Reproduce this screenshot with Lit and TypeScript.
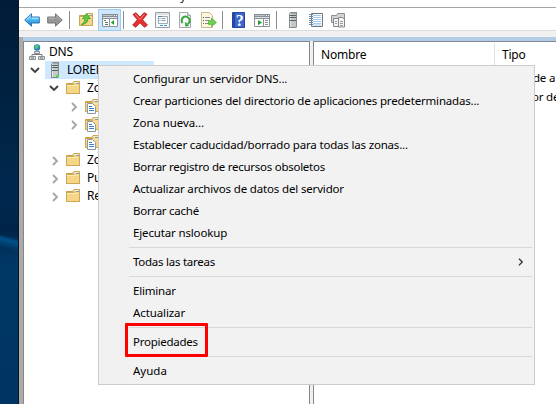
import { LitElement, html, css, svg, nothing } from "lit";
import { customElement, property } from "lit/decorators.js";
import { styleMap } from "lit/directives/style-map.js";

const folder = svg`
  <path d="M1.500 3.500h6l1.500-2h5.500v12h-13z" fill="#e9c97c" stroke="#c79d45"/>
  <path d="M9 2h5v3H9z" fill="#fff" stroke="#d9c58c" stroke-width=".6"/><path d="M11 3h3v1h-3z" fill="#4a93df"/>
  <path d="M1.500 4.500h7l1-.500h5v9.500h-13z" fill="#f5d686" stroke="#cda751"/>
  <path d="M2 5.500h7l1-.500h4" stroke="#fff0bd" fill="none"/>`;
const tower = svg`
  <path d="M4 2L5.500 0H12v15l-1 1H4z" fill="#858b8c"/>
  <path d="M5 1.500h6V15H5z" fill="#c3c8c9"/><path d="M5 1.500h1V15H5z" fill="#e4e7e7"/>
  <path d="M5 3.500h6M5 5.500h6M5 8.500h6" stroke="#5c6364"/>`;
const win = svg`
  <path d="M.500 3.500h15v11H.5z" fill="#fff" stroke="#8b9297"/>
  <path d="M0 2h16v5H0z" fill="#858e94"/><path d="M1 3.500h10" stroke="#bcc4c9"/><path d="M1 5.500h14" stroke="#dce2e5"/>
  <path d="M12 3.500h1M14 3.500h1" stroke="#fff"/>`;
const arrow = "M.7 8L7.500 1.800V5h7.800v6H7.500v3.200z";

const icons: Record<string, unknown> = {
  folder,
  back: svg`<defs><linearGradient id="b" x2="0" y2="1"><stop stop-color="#8edbff"/><stop offset=".5" stop-color="#4db8f0"/><stop offset="1" stop-color="#1675cc"/></linearGradient></defs>
    <path d=${arrow} fill="url(#b)" stroke="#2d75b5"/><path d="M2.500 7.500L7 3.500M8 6.200h6.500" stroke="#b8eaff" fill="none"/>`,
  forward: svg`<g transform="matrix(-1 0 0 1 16 0)"><path d=${arrow} fill="#969696" stroke="#747474"/><path d="M2.500 7.500L7 3.500M8 6.200h6.500" stroke="#bbb" fill="none"/></g>`,
  up: svg`${folder}<path d="M3 12.500c3.200-1 3.800-3.500 3.600-6H4.500L8.500 1.500l4 5h-2.700c.4 3.500-2 6-6.800 6z" fill="#5ccb3c" stroke="#2f9a22" stroke-width=".7"/>`,
  tree: svg`${win}<path d="M2 8.500h2M3 10.500h3M3 12.500h3" stroke="#637078"/><path d="M7.500 7v7" stroke="#8b9297"/><path d="M12 8v5L8.800 10.500z" fill="#23a12b"/>`,
  remove: svg`<path d="M1 2.500L4 .7l4 4.400L12 .7l3 1.500-4.500 5.600L15.500 13l-3 2.300L8 10.800l-4.300 4.500-3-2.300 4.700-5.200z" fill="#e6302e" stroke="#b01c20" stroke-width=".8"/><path d="M3.500 2.500l4.500 5 4-5" stroke="#ff8982" fill="none"/>`,
  props: svg`<path d="M.5.5h14v15H.5z" fill="#f7f8f9" stroke="#979ea5"/><path d="M1 2h13" stroke="#c4cbd0"/><path d="M3.500 4.500h9v7h-9z" fill="#fff" stroke="#a1abb4"/><path d="M3 4.500h4" stroke="#6f7d88"/><path d="M4.500 6.500h1M4.500 8.500h1M5 13.500h3M9 13.500h3" stroke="#39a0db"/><path d="M6.500 6.500h4M6.500 8.500h4" stroke="#8b9aa6"/>`,
  refresh: svg`<path d="M1.500.500h8l3 3v12h-11z" fill="#fafafa" stroke="#a3a8ab"/><path d="M9.500.500v3h3" fill="#ddd" stroke="#a3a8ab"/><path d="M4.600 11.200A4 4 0 1 1 9.700 12" fill="none" stroke="#35a63f" stroke-width="2"/><path d="M7.200 9.500v5l4-.5z" fill="#35a63f"/>`,
  export: svg`<path d="M.500.500h8l3 3v12H.5z" fill="#fdf7dc" stroke="#c6b98c"/><path d="M2 5.500h1M2 8.500h1M2 11.500h1" stroke="#555"/><path d="M4 5.500h5M4 8.500h4M4 11.500h4" stroke="#8b87a6"/><path d="M7.500 8.500h3V6l5 4.500-5 4.200V12.500h-3z" fill="#6bd04f" stroke="#43a535" stroke-width=".6"/>`,
  help: svg`<path d="M1.500.500h12v15h-12z" fill="#3b66cf" stroke="#24469e"/><path d="M2 1h2v14H2z" fill="#24469e"/><text x="8.700" y="13.500" text-anchor="middle" class="q">?</text>`,
  run: svg`${win}<path d="M4 8v5.200L8 10.600z" fill="#23a12b"/><path d="M9.500 7v7M11 8.500h3M11 10.500h3M11 12.500h3" stroke="#8b9297"/>`,
  server: tower,
  host: svg`${tower}<path d="M9 13h3v2H9z" fill="#4de02c"/>`,
  book: svg`<path d="M3.500 1.500h11v13h-11z" fill="#f9fbfd" stroke="#6f7780"/><path d="M5 3.500h8M5 5.500h8M5 7.500h8M5 9.500h8M5 11.500h8M5 13h8" stroke="#9cc5e8" stroke-width=".9"/><path d="M1 2.500h4M1 4.500h4M1 6.500h4M1 8.500h4M1 10.500h4M1 12.500h4" stroke="#6789aa"/>`,
  docs: svg`<path d="M1.500 3.500h5l1-2h7v9h-13z" fill="#d2d2d2" stroke="#909090"/><path d="M3.500 6.500h5v8h-5zM8.500 5.500h4l2 2v7.500h-6z" fill="#f5f5f5" stroke="#858585"/><path d="M5 9.500h2M5 11.500h2M10 9.500h3M10 11.500h3M10 13.500h3" stroke="#999"/>`,
  zone: svg`${folder}<path d="M3.500 5.500h5l3 3v7h-8z" fill="#fff" stroke="#8e99a5"/><path d="M5 8.500h3M5 10.500h5M5 12.500h5" stroke="#3b7fc4"/>`,
  dns: svg`<circle cx="8" cy="3.500" r="3.200" fill="#2682bf"/><path d="M6 1.500l3-.7 1 1.700-2 2.500-1.500-.5-1.200 1z" fill="#55c863"/><path d="M8 10v1M3 12v-1.500h10V12" stroke="#777" fill="none"/><path d="M5.500 7.500h5v2h-5z" fill="#e2e5e6" stroke="#8a9194"/><path d="M.500 12.500h6v3h-6zM9.500 12.500h6v3h-6z" fill="#e2e5e6" stroke="#8a9194"/><path d="M2 14h3M11 14h3" stroke="#697175"/>`,
};

@customElement("ui-icon")
class UiIcon extends LitElement {
  @property() name = "";
  static styles = css`
    :host { display: block; width: 16px; height: 16px; flex: none; }
    svg { display: block; }
    .q { font: bold 16px "Liberation Serif", serif; fill: #fff; }
  `;
  render() {
    return html`<svg width="16" height="16" viewBox="0 0 16 16">${icons[this.name]}</svg>`;
  }
}

interface Entry { label?: string; spacing?: number; sub?: boolean; marked?: boolean; }
const menu: Entry[] = [
  { label: "Configurar un servidor DNS...", spacing: -0.14 },
  { label: "Crear particiones del directorio de aplicaciones predeterminadas..." },
  { label: "Zona nueva...", spacing: -0.08 },
  { label: "Establecer caducidad/borrado para todas las zonas..." },
  { label: "Borrar registro de recursos obsoletos", spacing: -0.26 },
  { label: "Actualizar archivos de datos del servidor", spacing: -0.16 },
  { label: "Borrar caché", spacing: -0.26 },
  { label: "Ejecutar nslookup", spacing: -0.15 },
  {},
  { label: "Todas las tareas", sub: true, spacing: -0.26 },
  {},
  { label: "Eliminar", spacing: -0.2 },
  { label: "Actualizar", spacing: -0.1 },
  {},
  { label: "Propiedades", marked: true, spacing: -0.25 },
  {},
  { label: "Ayuda", spacing: 0 },
];

@customElement("context-menu")
class ContextMenu extends LitElement {
  static styles = css`
    :host { display: block; box-sizing: border-box; width: 437px; height: 320px; border: 1px solid #ccc; padding: 2px;
      background: linear-gradient(90deg, #f2f2f2 2px, #f0f0f0 2px 30px, #f2f2f2 30px); }
    .row { height: 22px; display: flex; align-items: center; justify-content: space-between; padding: 0 8px 0 32px; position: relative; white-space: pre; }
    .line { height: 1px; margin: 3px 0 3px 28px; background: #d7d7d7; }
    .mark { position: absolute; left: 24px; top: -8px; width: 83px; height: 34px; box-sizing: border-box; border: 3px solid #fe0000; border-radius: 1px; z-index: 1; }
  `;
  render() {
    return menu.map((m) => m.label
      ? html`<div class="row"><span style=${styleMap({ letterSpacing: (m.spacing ?? -0.18) + "px" })}>${m.label}</span>
          ${m.sub ? html`<svg width="6" height="8" viewBox="0 0 6 8"><path d="M1 .8L4.300 4 1 7.200" fill="none" stroke="#333" stroke-width="1.300"/></svg>` : nothing}
          ${m.marked ? html`<div class="mark"></div>` : nothing}</div>`
      : html`<div class="line"></div>`);
  }
}

const tree = [
  { icon: "dns", label: "DNS", depth: 0 },
  { icon: "host", label: "LOREN", depth: 1, open: true, selected: true },
  { icon: "folder", label: "Zo", depth: 2, open: true },
  { icon: "zone", label: "", depth: 3, open: false },
  { icon: "zone", label: "", depth: 3, open: false },
  { icon: "zone", label: "", depth: 3 },
  { icon: "folder", label: "Zo", depth: 2, open: false },
  { icon: "folder", label: "Pu", depth: 2, open: false },
  { icon: "folder", label: "Re", depth: 2, open: false },
];

@customElement("app-root")
class AppRoot extends LitElement {
  static styles = css`
    :host { display: flex; position: relative; width: 556px; height: 404px; overflow: hidden; background: #fff; color: #000;
      font: 11.5px/18px "Noto Sans", "Open Sans", sans-serif; letter-spacing: -.2px; }
    .desk { width: 18px; border-right: 1px solid #111519; flex: none;
      background: linear-gradient(194deg, #00477c00 36%, #00508a 48%, #00477c00 75%) 0 226px / 18px 30px no-repeat,
        linear-gradient(#001c38, #00213f 20%, #00284f 48%, #002448 57%, #003764 64%, #003563); }
    .app { flex: 1; min-width: 0; display: flex; flex-direction: column; }
    .top { height: 7px; border-bottom: 1px solid #a4a6ab; overflow: hidden; display: flex; align-items: flex-end; padding-left: 154px; }
    .top span { height: 18px; margin-bottom: 2px; display: block; }
    .bar { height: 22px; border-bottom: 1px solid #dcdcdc; display: flex; align-items: center; padding-left: 5px; }
    .bar ui-icon { margin-top: 2px; }
    .sep { width: 1px; height: 18px; background: #8c8c8c; margin-top: 2px; }
    .on { width: 23px; height: 22px; box-sizing: border-box; border: 1px solid #99ccf3; background: #cde6fc; display: flex; justify-content: center; margin-top: 1px; align-items: center; }
    .on ui-icon { margin: 0; }
    .gap { height: 6px; background: #f0f0f0; border-left: 4px solid #f0f0f0; }
    .main { flex: 1; display: flex; border-left: 4px solid #ababab; background: #f0f0f0; }
    .left, .right { border-top: 1px solid #828790; background: #fff; box-sizing: border-box; }
    .band { display: flex; flex-direction: column; flex: 1; min-width: 0; border-top: 4px solid #b4cde6; }
    .panes { flex: 1; display: flex; gap: 3px; }
    .left { width: 287px; border-left: 1px solid #828790; border-right: 1px solid #828790; padding-top: 1px; }
    .right { flex: 1; min-width: 0; border-left: 1px solid #828790; }
    .node { height: 18px; display: flex; align-items: center; white-space: pre; font-size: 12px; }
    .tw { width: 12px; height: 12px; margin: 0 4px 0 -16px; }
    .tw path { fill: none; stroke-width: 1.900; }
    .open path { stroke: #404040; } .shut path { stroke: #a6a6a6; }
    .cell { display: flex; align-items: center; align-self: stretch; box-sizing: border-box; }
    .cell span { margin-left: 4px; }
    .inner { padding-left: 1px; }
    .inner span { margin-left: 6px; }
    .sel { background: #cde8ff; width: 109px; padding-left: 2px; }
    .sel span { margin-left: 4px; }
    .head { height: 23px; display: flex; font-size: 12px; letter-spacing: -.2px; }
    .head div { box-sizing: border-box; padding-left: 7px; line-height: 25px; }
    .head .name { width: 181px; border-right: 1px solid #e2e2e2; margin-top: 1px; height: 22px; line-height: 23px; }
    .vals { padding: 3px 0 0 219px; line-height: 19px; white-space: pre; letter-spacing: -.2px; }
    .vals div + div { margin-left: -1px; }
    context-menu { position: absolute; left: 98px; top: 65px; }
  `;
  private tools: [string, number][] = [["back", 0], ["forward", 7], ["|", 6], ["up", 8], ["tree", 4], ["|", 2], ["remove", 8], ["props", 7],
    ["refresh", 7], ["export", 7], ["|", 5], ["help", 8], ["run", 7], ["|", 6], ["server", 8], ["book", 7], ["docs", 6]];

  render() {
    return html`
      <div class="desk"></div>
      <div class="app">
        <div class="top"><span>Ayuda</span></div>
        <div class="bar">${this.tools.map(([n, gap]) => {
          const style = styleMap({ marginLeft: gap + "px" });
          return n === "|" ? html`<div class="sep" style=${style}></div>`
            : n === "tree" ? html`<div class="on" style=${style}><ui-icon name="tree"></ui-icon></div>`
            : html`<ui-icon name=${n} style=${style}></ui-icon>`;
        })}</div>
        <div class="gap"></div>
        <div class="main"><div class="band"><div class="panes">
          <div class="left">${tree.map((t) => html`
            <div class="node" style=${styleMap({ paddingLeft: [5, 21, 40, 59][t.depth] + "px" })}>
              ${t.open === undefined ? nothing : html`<svg class="tw ${t.open ? "open" : "shut"}" viewBox="0 0 12 12">
                <path d=${t.open ? "M2 4l4 4 4-4" : "M5 3l4 4-4 4"} /></svg>`}
              <div class="cell ${t.depth ? "inner" : ""} ${t.selected ? "sel" : ""}"><ui-icon name=${t.icon}></ui-icon><span>${t.label}</span></div>
            </div>`)}</div>
          <div class="right">
            <div class="head"><div class="name">Nombre</div><div>Tipo</div></div>
            <div class="vals"><div>de a</div><div>or de</div></div>
          </div>
        </div></div></div>
      </div>
      <context-menu></context-menu>`;
  }
}
